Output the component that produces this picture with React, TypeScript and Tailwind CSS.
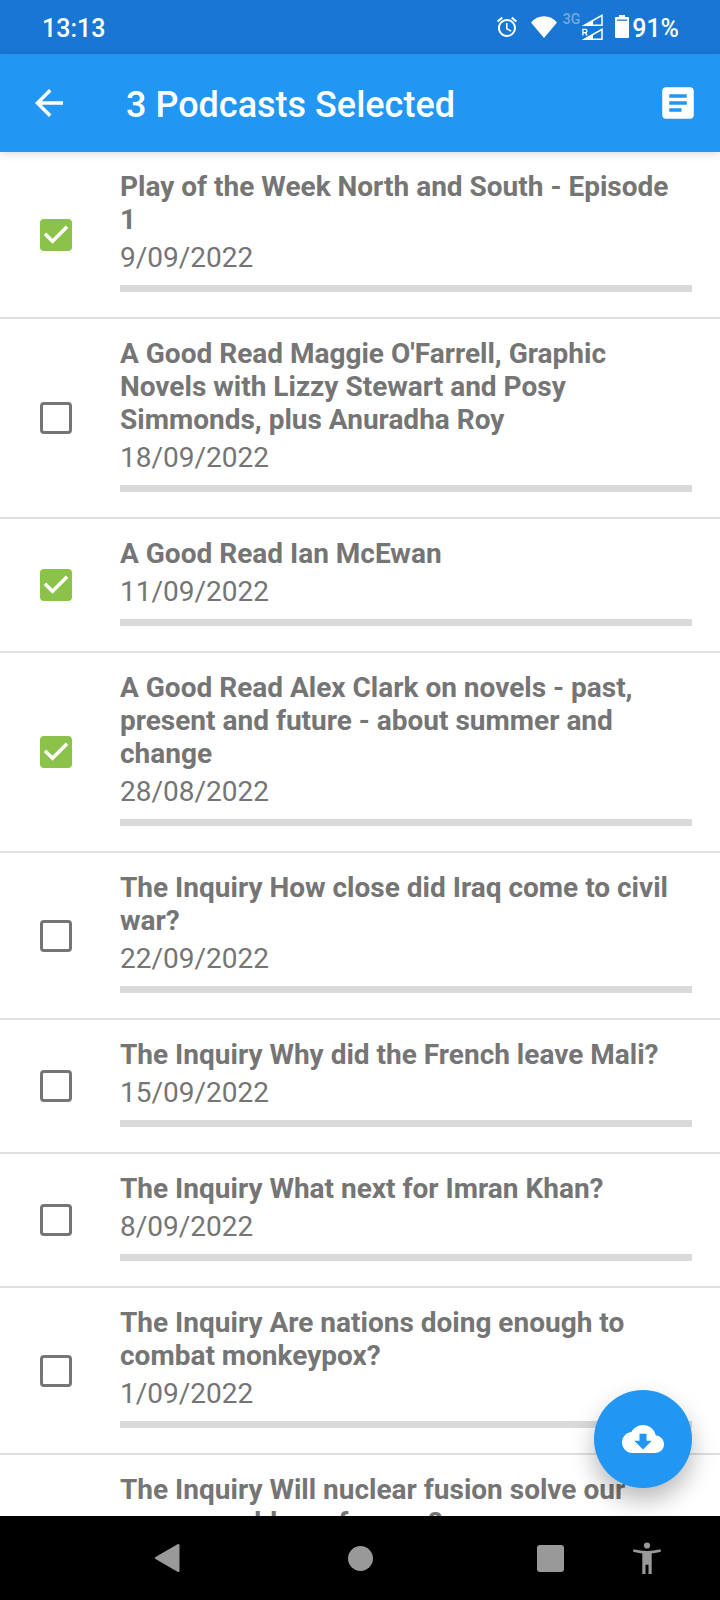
import { useState } from "react";

type Podcast = { title: string; date: string };

const podcasts: Podcast[] = [
  { title: "Play of the Week North and South - Episode 1", date: "9/09/2022" },
  {
    title: "A Good Read Maggie O'Farrell, Graphic Novels with Lizzy Stewart and Posy Simmonds, plus Anuradha Roy",
    date: "18/09/2022",
  },
  { title: "A Good Read Ian McEwan", date: "11/09/2022" },
  { title: "A Good Read Alex Clark on novels - past, present and future - about summer and change", date: "28/08/2022" },
  { title: "The Inquiry How close did Iraq come to civil war?", date: "22/09/2022" },
  { title: "The Inquiry Why did the French leave Mali?", date: "15/09/2022" },
  { title: "The Inquiry What next for Imran Khan?", date: "8/09/2022" },
  { title: "The Inquiry Are nations doing enough to combat monkeypox?", date: "1/09/2022" },
  { title: "The Inquiry Will nuclear fusion solve our energy problems forever?", date: "25/08/2022" },
];

function StatusBar() {
  return (
    <div className="flex h-[54px] shrink-0 items-center justify-between bg-[#1976d2] pl-[42px] pr-[41px] text-[25px] font-medium leading-8 text-white">
      <span className="pt-1">13:13</span>
      <div className="flex items-center">
        <svg className="mr-3 size-6" viewBox="0 0 24 24" fill="currentColor" aria-hidden="true">
          <path d="M22 5.72l-4.6-3.86-1.29 1.53 4.6 3.86L22 5.72zM7.88 3.39L6.6 1.86 2 5.71l1.29 1.53 4.59-3.85zM12.5 8H11v6l4.75 2.85.75-1.23-4-2.37V8zM12 4c-4.97 0-9 4.03-9 9s4.02 9 9 9a9 9 0 0 0 0-18zm0 16c-3.87 0-7-3.13-7-7s3.13-7 7-7 7 3.13 7 7-3.13 7-7 7z" />
        </svg>
        <svg className="mr-1.5 h-[22px] w-[26px]" viewBox="0 0 26 22" fill="currentColor" aria-hidden="true">
          <path d="M13 22L0 6.500C3.500 2.500 8 .3 13 .3s9.500 2.200 13 6.200z" />
        </svg>
        <span className="mb-4 text-sm leading-4 text-white/40">3G</span>
        <svg className="ml-0.5 mr-3 h-[26px] w-[21px]" viewBox="0 0 21 26" aria-hidden="true">
          <path d="M2.500 11.300H20V1.300z" fill="none" stroke="currentColor" strokeWidth="1.500" />
          <path d="M1 12L11 6v6z" fill="currentColor" />
          <path d="M2.500 25.300H20v-10z" fill="none" stroke="currentColor" strokeWidth="1.500" />
          <path d="M1 26l10-6v6z" fill="currentColor" />
          <path d="M.9 21.500v-6.200h2.400a1.700 1.700 0 0 1 0 3.400H1m2.200 0l2 2.800" fill="none" stroke="currentColor" strokeWidth="1.300" />
        </svg>
        <svg className="mr-[3px] h-6 w-[14px]" viewBox="0 0 14 24" aria-hidden="true">
          <path d="M4 0h6v2h3a1 1 0 0 1 1 1v19a1 1 0 0 1-1 1H1a1 1 0 0 1-1-1V3a1 1 0 0 1 1-1h3z" fill="currentColor" />
          <path d="M2 4.500h10v1.300H2z" fill="#1976d2" />
        </svg>
        <span className="pt-1">91%</span>
      </div>
    </div>
  );
}

function AppBar({ count }: { count: number }) {
  return (
    <header className="relative z-10 flex h-[98px] shrink-0 items-center bg-[#2196f3] pl-7 pr-[21px] text-white shadow-[0_2px_8px_rgba(0,0,0,0.15)]">
      <button type="button" aria-label="Back">
        <svg className="size-[42px]" viewBox="0 0 24 24" fill="currentColor" aria-hidden="true">
          <path d="M20 11H7.830l5.590-5.590L12 4l-8 8 8 8 1.410-1.410L7.830 13H20v-2z" />
        </svg>
      </button>
      <h1 className="ml-14 flex-1 pt-1 text-4xl font-medium leading-10">{count} Podcasts Selected</h1>
      <button type="button" aria-label="Show notes">
        <svg className="size-[42px]" viewBox="0 0 24 24" fill="currentColor" aria-hidden="true">
          <path d="M19 3H5c-1.100 0-2 .9-2 2v14c0 1.100.9 2 2 2h14c1.100 0 2-.9 2-2V5c0-1.100-.9-2-2-2zm-5 14H7v-2h7v2zm3-4H7v-2h10v2zm0-4H7V7h10v2z" />
        </svg>
      </button>
    </header>
  );
}

function PodcastRow({
  podcast,
  checked,
  id,
  onToggle,
}: {
  podcast: Podcast;
  checked: boolean;
  id: string;
  onToggle: () => void;
}) {
  return (
    <li className="flex items-center border-b-2 border-[#dfdfdf] pr-7">
      <div className="ml-[35px] mr-[43px] grid size-[42px] shrink-0 place-items-center">
        <input
          id={id}
          type="checkbox"
          checked={checked}
          onChange={onToggle}
          className="col-start-1 row-start-1 size-8 appearance-none rounded-[4px] border-[3px] border-[#757575] checked:border-[#8bc34a] checked:bg-[#8bc34a]"
        />
        {checked && (
          <svg
            className="pointer-events-none col-start-1 row-start-1 size-[42px] text-white"
            viewBox="0 0 24 24"
            fill="currentColor"
            aria-hidden="true"
          >
            <path d="M10 17l-5-5 1.410-1.410L10 14.170l7.590-7.590L19 8l-9 9z" />
          </svg>
        )}
      </div>
      <div className="min-w-0 flex-1 pb-[25px] pt-[18px] text-[28px] leading-[33px] text-[#757575]">
        <label htmlFor={id} className="block pr-3 font-bold">
          {podcast.title}
        </label>
        <p className="mt-[5px]">{podcast.date}</p>
        <div
          role="progressbar"
          aria-label="Playback progress"
          aria-valuenow={0}
          className="mt-[11px] h-[7px] bg-[#dadada]"
        />
      </div>
    </li>
  );
}

function NavigationBar() {
  return (
    <nav className="grid h-[84px] shrink-0 grid-cols-[1fr_auto_1fr] items-center bg-black text-[#999999]">
      <div className="flex justify-end pr-[168px]">
        <button type="button" aria-label="System back">
          <svg className="h-[30px] w-[26px]" viewBox="0 0 26 30" fill="currentColor" aria-hidden="true">
            <path d="M23.500 1.300Q25.500.3 25.500 2.500v25q0 2.200-2 1.200L1.500 16q-1.500-1 0-2z" />
          </svg>
        </button>
      </div>
      <button type="button" aria-label="Home" className="size-[25px] rounded-full bg-[#999999]" />
      <div className="flex items-center pl-[164px]">
        <button type="button" aria-label="Recent apps" className="size-[27px] rounded-[3px] bg-[#999999]" />
        <button type="button" aria-label="Accessibility" className="ml-[69px]">
          <svg className="h-8 w-7" viewBox="0 0 28 32" fill="currentColor" aria-hidden="true">
            <circle cx="14" cy="3.500" r="3.100" />
            <path d="M.6 7.200Q14 10.600 27.400 7.200l.5 2.600q-4.500 1.100-9.200 1.600V32h-3.200v-9.300h-3V32H9.300V11.400Q4.600 10.900.1 9.800z" />
          </svg>
        </button>
      </div>
    </nav>
  );
}

export default function App() {
  const [selected, setSelected] = useState<number[]>([0, 2, 3]);

  const toggle = (index: number) =>
    setSelected((current) =>
      current.includes(index) ? current.filter((i) => i !== index) : [...current, index],
    );

  return (
    <div className="flex h-screen flex-col bg-white font-[Roboto,sans-serif]">
      <StatusBar />
      <AppBar count={selected.length} />
      <main className="relative min-h-0 flex-1">
        <ul className="h-full overflow-y-auto [scrollbar-width:none]">
          {podcasts.map((podcast, index) => (
            <PodcastRow
              key={podcast.title}
              id={`podcast-${index}`}
              podcast={podcast}
              checked={selected.includes(index)}
              onToggle={() => toggle(index)}
            />
          ))}
        </ul>
        <button
          type="button"
          aria-label="Download selected"
          className="absolute bottom-7 right-7 flex size-[98px] items-center justify-center rounded-full bg-[#2196f3] text-white shadow-[0_12px_24px_rgba(0,0,0,0.28)]"
        >
          <svg className="size-[42px]" viewBox="0 0 24 24" fill="currentColor" aria-hidden="true">
            <path d="M19.350 10.040C18.670 6.590 15.640 4 12 4 9.110 4 6.600 5.640 5.350 8.040 2.340 8.360 0 10.910 0 14c0 3.310 2.690 6 6 6h13c2.760 0 5-2.240 5-5 0-2.640-2.050-4.780-4.650-4.960zM17 13l-5 5-5-5h3V9h4v4h3z" />
          </svg>
        </button>
      </main>
      <NavigationBar />
    </div>
  );
}
